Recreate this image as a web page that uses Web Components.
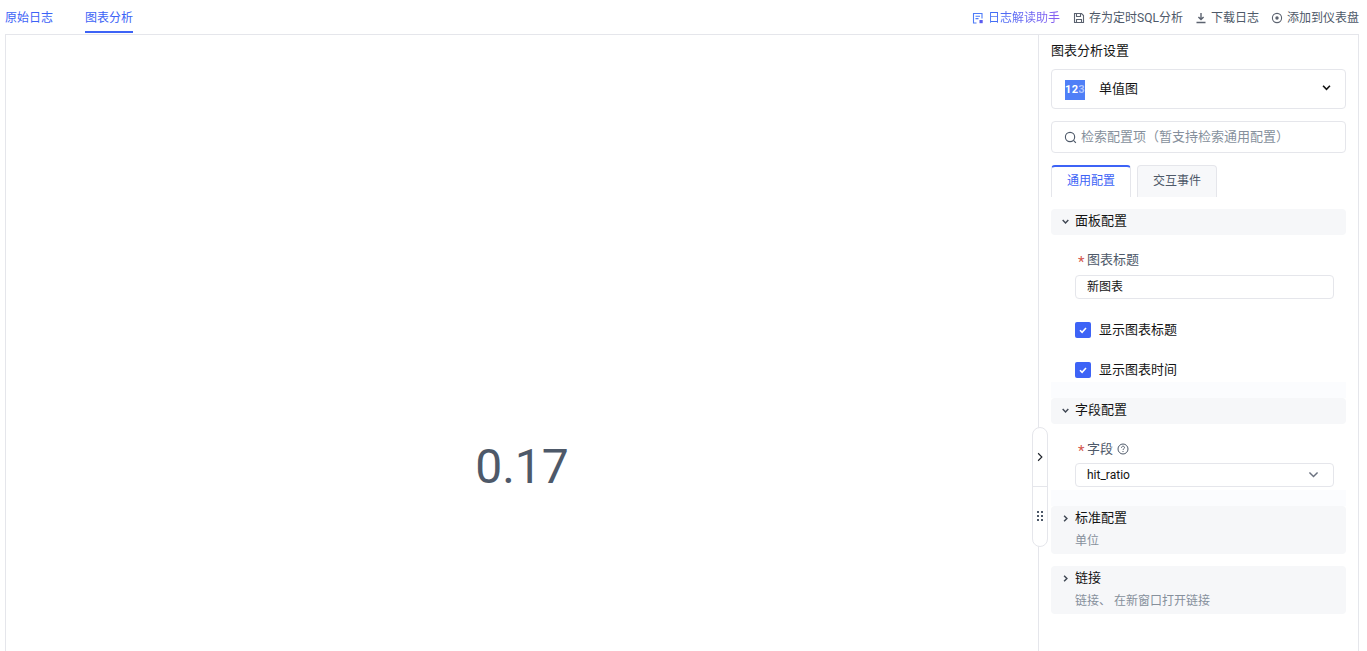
<!DOCTYPE html>
<html lang="zh">
<head>
<meta charset="utf-8">
<title>图表分析</title>
<style>
  html, body { margin: 0; height: 100%; overflow: hidden; background: #fff; }
  body { font: 13px/20px Roboto, "Noto Sans CJK SC", sans-serif; color: #141414; }
</style>
</head>
<body>
<log-page>
  <log-toolbar slot="bar">
    <tab-link>原始日志</tab-link>
    <tab-link active>图表分析</tab-link>
    <action-link slot="actions" gradient icon="helper">日志解读助手</action-link>
    <action-link slot="actions" icon="save">存为定时SQL分析</action-link>
    <action-link slot="actions" icon="download">下载日志</action-link>
    <action-link slot="actions" icon="target">添加到仪表盘</action-link>
  </log-toolbar>
  <single-value>0.17</single-value>
  <settings-panel>
    <chart-picker></chart-picker>
    <config-search></config-search>
    <config-tabs></config-tabs>
    <config-section title="面板配置" open>
      <form-field label="图表标题" required><text-box>新图表</text-box></form-field>
      <check-row>显示图表标题</check-row>
      <check-row>显示图表时间</check-row>
    </config-section>
    <config-section title="字段配置" open>
      <form-field label="字段" required help><text-box select>hit_ratio</text-box></form-field>
    </config-section>
    <config-section title="标准配置" hint="单位"></config-section>
    <config-section title="链接" hint="链接、 在新窗口打开链接"></config-section>
  </settings-panel>
</log-page>

<script>
const chevron = (dir, size, width) => {
  const d = dir === 'down' ? 'M3 5.5l5 5 5-5' : 'M5.5 3l5 5-5 5'
  return `<svg width="${size}" height="${size}" viewBox="0 0 16 16" fill="none" stroke="currentColor" stroke-width="${width}"><path d="${d}"/></svg>`
}

const icons = {
  helper: `<path d="M4.5 11H1.5V1.5h8.5V6.5"/><path d="M3.5 4.2h4.5M3.5 6.6h3"/><rect x="7.5" y="8" width="3.2" height="3.2" fill="#5b5cf0" stroke="none"/>`,
  save: `<path d="M1.5 1.5h7l2 2v7h-9z"/><path d="M3.5 1.5v3h4v-3" /><path d="M3.5 10.5V7.5h5v3" />`,
  download: `<path d="M6 1v6.5M3.4 5L6 7.6 8.6 5M1.5 10.5h9" stroke-width="1.4"/>`,
  target: `<circle cx="6" cy="6" r="4.6"/><circle cx="6" cy="6" r="1.7" fill="currentColor" stroke="none"/>`
}

class LogPage extends HTMLElement {
  constructor() {
    super()
    this.attachShadow({ mode: 'open' })
    this.shadowRoot.innerHTML = `
      <style>
        :host { display: flex; flex-direction: column; height: 651px; padding: 0 8px 0 5px; box-sizing: border-box; }
        #body { flex: 1; min-height: 0; display: flex; border: 1px solid #e5e6eb; border-bottom: 0; position: relative; }
      </style>
      <slot name="bar"></slot>
      <div id="body"><slot></slot></div>
    `
  }
}

class LogToolbar extends HTMLElement {
  constructor() {
    super()
    this.attachShadow({ mode: 'open' })
    this.shadowRoot.innerHTML = `
      <style>
        :host { display: flex; justify-content: space-between; height: 34px; flex: none; }
        #tabs { display: flex; gap: 32px; }
        #actions { display: flex; gap: 12px; }
      </style>
      <div id="tabs"><slot></slot></div>
      <div id="actions"><slot name="actions"></slot></div>
    `
  }
}

class TabLink extends HTMLElement {
  constructor() {
    super()
    this.attachShadow({ mode: 'open' })
    this.shadowRoot.innerHTML = `
      <style>
        :host { display: block; height: 34px; box-sizing: border-box; padding-top: 8px; font-size: 12px; line-height: 20px; color: #3d63f6; }
        :host([active]) { border-bottom: 2px solid #3d63f6; height: 33px; }
      </style>
      <slot></slot>
    `
  }
}

class ActionLink extends HTMLElement {
  constructor() {
    super()
    this.attachShadow({ mode: 'open' })
    const icon = icons[this.getAttribute('icon')]
    this.shadowRoot.innerHTML = `
      <style>
        :host { display: flex; align-items: center; gap: 4px; height: 34px; padding-top: 2px; font-size: 12px; color: #4e5969; box-sizing: border-box; }
        :host([gradient]) { margin-right: 1px; }
        svg { flex: none; color: #5c6370; }
        :host([gradient]) svg { color: #4f7cf7; }
        :host([gradient]) span { background: linear-gradient(90deg, #3d6ff5, #8a5cf0); -webkit-background-clip: text; background-clip: text; color: transparent; }
      </style>
      <svg width="12" height="12" viewBox="0 0 12 12" fill="none" stroke="currentColor" stroke-width="1.1">${icon}</svg>
      <span><slot></slot></span>
    `
  }
}

class SingleValue extends HTMLElement {
  constructor() {
    super()
    this.attachShadow({ mode: 'open' })
    this.shadowRoot.innerHTML = `
      <style>
        :host { flex: 1; min-width: 0; display: flex; align-items: center; justify-content: center; font: 48px/56px Roboto, sans-serif; color: #4e5969; padding-top: 247px; box-sizing: border-box; }
      </style>
      <slot></slot>
    `
  }
}

class SettingsPanel extends HTMLElement {
  constructor() {
    super()
    this.attachShadow({ mode: 'open' })
    this.shadowRoot.innerHTML = `
      <style>
        :host { flex: none; width: 320px; box-sizing: border-box; border-left: 1px solid #e5e6eb; padding: 6px 12px 0; position: relative; }
        h2 { margin: 0 0 8px; font-size: 13px; font-weight: 400; line-height: 20px; }
        #handle { position: absolute; left: -7px; top: 392px; width: 16px; height: 120px; box-sizing: border-box; background: #fff; border: 1px solid #e5e6eb; border-radius: 8px; display: flex; flex-direction: column; color: #1d2129; }
        #handle div { height: 58px; display: flex; align-items: center; justify-content: center; }
        #handle div + div { height: 60px; border-top: 1px solid #e5e6eb; }
      </style>
      <h2>图表分析设置</h2>
      <slot></slot>
      <div id="handle">
        <div>${chevron('right', 12, 1.5)}</div>
        <div>
          <svg width="8" height="12" viewBox="0 0 8 12" fill="#4e5969"><rect x="1" y="1" width="2" height="2"/><rect x="5" y="1" width="2" height="2"/><rect x="1" y="5" width="2" height="2"/><rect x="5" y="5" width="2" height="2"/><rect x="1" y="9" width="2" height="2"/><rect x="5" y="9" width="2" height="2"/></svg>
        </div>
      </div>
    `
  }
}

class ChartPicker extends HTMLElement {
  constructor() {
    super()
    this.attachShadow({ mode: 'open' })
    this.shadowRoot.innerHTML = `
      <style>
        :host { display: flex; align-items: center; height: 40px; box-sizing: border-box; border: 1px solid #e5e6eb; border-radius: 4px; padding: 0 13px; margin-bottom: 12px; }
        #logo { width: 20px; height: 20px; margin-top: 1px; background: #4f7ff7; color: #fff; font: 700 11px/20px Roboto, sans-serif; text-align: center; letter-spacing: .4px; }
        #logo span { opacity: .55; }
        #name { flex: 1; margin-left: 14px; }
        svg { margin-top: -3px; }
      </style>
      <div id="logo">12<span>3</span></div>
      <div id="name">单值图</div>
      ${chevron('down', 11, 2.4)}
    `
  }
}

class ConfigSearch extends HTMLElement {
  constructor() {
    super()
    this.attachShadow({ mode: 'open' })
    this.shadowRoot.innerHTML = `
      <style>
        :host { display: flex; align-items: center; gap: 4px; height: 32px; box-sizing: border-box; border: 1px solid #e5e6eb; border-radius: 4px; padding: 0 12px; margin-bottom: 12px; color: #86909c; }
        svg { flex: none; color: #4e5969; }
      </style>
      <svg width="13" height="13" viewBox="0 0 14 14" fill="none" stroke="currentColor" stroke-width="1.2"><circle cx="6.5" cy="6.5" r="5"/><path d="M10.2 10.2l2.6 2.6"/></svg>
      <span>检索配置项（暂支持检索通用配置）</span>
    `
  }
}

class ConfigTabs extends HTMLElement {
  constructor() {
    super()
    this.attachShadow({ mode: 'open' })
    this.shadowRoot.innerHTML = `
      <style>
        :host { display: flex; gap: 6px; height: 32px; margin-bottom: 12px; }
        div { width: 80px; box-sizing: border-box; border: 1px solid #e5e6eb; border-bottom: 0; border-radius: 4px 4px 0 0; text-align: center; font-size: 12px; line-height: 30px; background: #f7f8fa; color: #4e5969; }
        #on { background: #fff; color: #3d63f6; border-top: 2px solid #3d63f6; line-height: 29px; }
      </style>
      <div id="on">通用配置</div>
      <div>交互事件</div>
    `
  }
}

class ConfigSection extends HTMLElement {
  constructor() {
    super()
    this.attachShadow({ mode: 'open' })
    const open = this.hasAttribute('open')
    const hint = this.getAttribute('hint')
    this.shadowRoot.innerHTML = `
      <style>
        :host { display: block; margin-bottom: 12px; }
        :host([open]) { margin-bottom: 0; }
        #box { background: #f6f7f9; border-radius: 4px; padding: 2px 0 4px; }
        :host(:not([open])) #box { padding: 2px 0 3px; }
        #head { display: flex; align-items: center; height: 20px; }
        #arrow { width: 24px; display: flex; justify-content: center; padding-left: 4px; box-sizing: border-box; color: #3f4753; }
        #hint { margin: 3px 0 0 24px; font-size: 12px; color: #86909c; }
        #body { padding: 15px 12px 18px 24px; background: linear-gradient(#fff calc(100% - 16px), #fbfcfe 0); }
      </style>
      <div id="box">
        <div id="head"><span id="arrow">${chevron(open ? 'down' : 'right', 9, 2.6)}</span><span>${this.getAttribute('title')}</span></div>
        ${hint ? `<div id="hint">${hint}</div>` : ''}
      </div>
      ${open ? '<div id="body"><slot></slot></div>' : ''}
    `
  }
}

class FormField extends HTMLElement {
  constructor() {
    super()
    this.attachShadow({ mode: 'open' })
    const help = this.hasAttribute('help')
    this.shadowRoot.innerHTML = `
      <style>
        :host { display: block; padding-bottom: 1px; }
        label { display: flex; align-items: center; height: 20px; margin-bottom: 5px; padding-left: 3px; color: #4e5969; }
        :host([help]) label { margin-bottom: 4px; }
        b { font: 400 15px/20px Roboto, sans-serif; color: #d4574e; width: 9px; height: 16px; }
        svg { margin-left: 4px; color: #4e5969; }
      </style>
      <label><b>*</b><span>${this.getAttribute('label')}</span>${help ? `<svg width="12" height="12" viewBox="0 0 12 12" fill="none" stroke="currentColor"><circle cx="6" cy="6" r="5"/><path d="M4.5 4.7c0-2 3-2 3-.1 0 1.2-1.5 1.2-1.5 2.4M6 8v1"/></svg>` : ''}</label>
      <slot></slot>
    `
  }
}

class TextBox extends HTMLElement {
  constructor() {
    super()
    this.attachShadow({ mode: 'open' })
    this.shadowRoot.innerHTML = `
      <style>
        :host { display: flex; align-items: center; justify-content: space-between; height: 24px; box-sizing: border-box; border: 1px solid #e5e6eb; border-radius: 4px; padding: 0 13px 0 11px; font-size: 12px; }
        svg { color: #6b7280; margin-top: -2px; }
      </style>
      <span><slot></slot></span>
      ${this.hasAttribute('select') ? chevron('down', 13, 1.8) : ''}
    `
  }
}

class CheckRow extends HTMLElement {
  constructor() {
    super()
    this.attachShadow({ mode: 'open' })
    this.shadowRoot.innerHTML = `
      <style>
        :host { display: flex; align-items: center; gap: 8px; height: 20px; margin-top: 20px; }
        #box { width: 16px; height: 16px; background: #3d63f6; border-radius: 2px; display: flex; align-items: center; justify-content: center; }
      </style>
      <div id="box"><svg width="10" height="10" viewBox="0 0 10 10" fill="none" stroke="#fff" stroke-width="1.6"><path d="M2 5.2l2.1 2.1L8 3"/></svg></div>
      <span><slot></slot></span>
    `
  }
}

customElements.define('log-page', LogPage)
customElements.define('log-toolbar', LogToolbar)
customElements.define('tab-link', TabLink)
customElements.define('action-link', ActionLink)
customElements.define('single-value', SingleValue)
customElements.define('settings-panel', SettingsPanel)
customElements.define('chart-picker', ChartPicker)
customElements.define('config-search', ConfigSearch)
customElements.define('config-tabs', ConfigTabs)
customElements.define('config-section', ConfigSection)
customElements.define('form-field', FormField)
customElements.define('text-box', TextBox)
customElements.define('check-row', CheckRow)
</script>
</body>
</html>
